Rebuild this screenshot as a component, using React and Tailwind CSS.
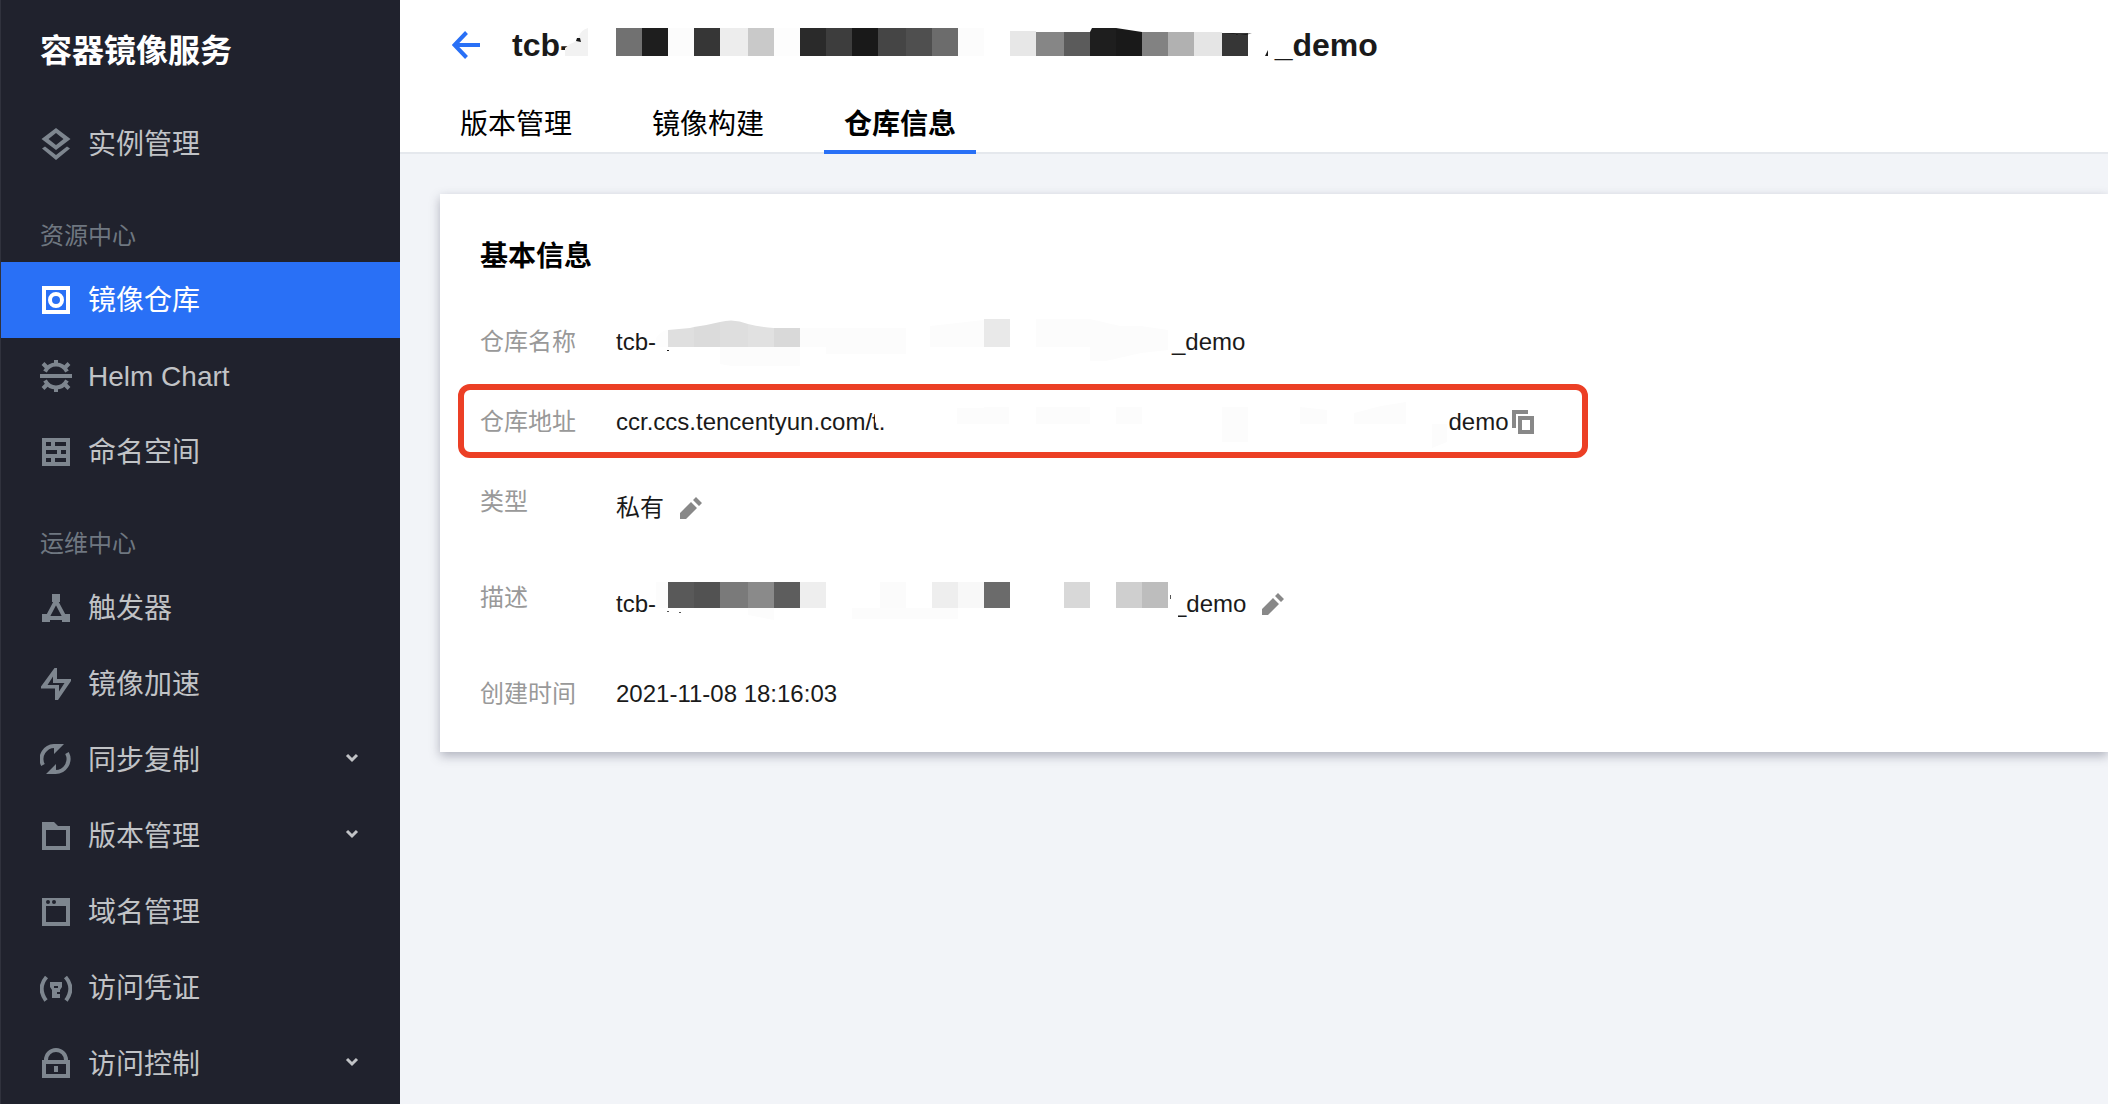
const FONT = "font-['Liberation_Sans','Noto_Sans_CJK_SC',sans-serif]";

const ICONS = {
  layers: (
    <path
      fillRule="evenodd"
      fill="currentColor"
      d="M16 0 30.500 11 16 22 1.500 11ZM16 5 8.500 11 16 17 23.500 11ZM2 20.500 5 18.500 16 27 27 18.500 30 20.500 16 32Z"
    />
  ),
  repo: (
    <>
      <path d="M4 4H28V28H4Z" fill="none" stroke="currentColor" strokeWidth="4" />
      <circle cx="16" cy="16" r="6" fill="none" stroke="currentColor" strokeWidth="4" />
    </>
  ),
  helm: (
    <g fill="none" stroke="currentColor" strokeWidth="4">
      <path d="M0 16H32" />
      <path d="M5 11.5C8 6 12 4.5 16 4.5S24 6 27 11.5" />
      <path d="M5 20.500C8 26 12 27.500 16 27.500S24 26 27 20.500" />
      <path d="M16 0V5M16 27V32M3 3.500 8 8.500M29 3.500 24 8.500M3 28.500 8 23.500M29 28.500 24 23.500" />
    </g>
  ),
  brick: (
    <path
      fillRule="evenodd"
      fill="currentColor"
      d="M2 2H30V30H2ZM6 6V10H11V6ZM15 6V10H26V6ZM6 14V18H17V14ZM21 14V18H26V14ZM6 22V26H11V22ZM15 22V26H26V22Z"
    />
  ),
  trigger: (
    <>
      <path d="M16 9 7 26H25Z" fill="none" stroke="currentColor" strokeWidth="4" />
      <path d="M12 2H20V10H12ZM2 22H10V30H2ZM22 22H30V30H22Z" fill="currentColor" />
    </>
  ),
  bolt: (
    <path
      fillRule="evenodd"
      fill="currentColor"
      d="M14.500 0H17V11H31V13L18 32H15V20.500H1V18.500ZM13 8.500 7.500 17H19V23.500L24.500 15H13Z"
    />
  ),
  sync: (
    <>
      <path d="M3 21A13 13 0 0 1 15 2" fill="none" stroke="currentColor" strokeWidth="4" />
      <path d="M27 9A13 13 0 0 1 15 28" fill="none" stroke="currentColor" strokeWidth="4" />
      <path d="M14 0H24L14 10ZM16 30H6L16 20Z" fill="currentColor" />
    </>
  ),
  folder: (
    <path fillRule="evenodd" fill="currentColor" d="M2 2H14L18 6H30V30H2ZM6 10V26H26V10Z" />
  ),
  window: (
    <path
      fillRule="evenodd"
      fill="currentColor"
      d="M2 2H30V30H2ZM6 10V26H26V10ZM6 6A2 2 0 1 0 10 6A2 2 0 1 0 6 6ZM12 6A2 2 0 1 0 16 6A2 2 0 1 0 12 6Z"
    />
  ),
  key: (
    <>
      <path d="M6.500 5Q-3 16 6 28.500M25.500 5Q35 16 26 28.500" fill="none" stroke="currentColor" strokeWidth="4" />
      <path
        fillRule="evenodd"
        fill="currentColor"
        d="M10 10H22V15L20 18V20H17V22H20V26H12V18L10 15ZM14 14V16H18V14Z"
      />
    </>
  ),
  lock: (
    <>
      <path d="M6 14V12A10 10 0 0 1 26 12V14" fill="none" stroke="currentColor" strokeWidth="4" />
      <path fillRule="evenodd" fill="currentColor" d="M2 12H30V30H2ZM6 16V26H26V16ZM14 18H18V24H14Z" />
    </>
  ),
};

function NavItem({ icon, label, active, expandable }) {
  return (
    <li>
      <a
        href="#"
        aria-current={active ? "page" : undefined}
        className={
          active
            ? "flex h-[76px] items-center gap-4 bg-[#2970f6] pr-10 pl-[39px] text-white"
            : "flex h-[76px] items-center gap-4 pr-10 pl-[39px] text-[#c1c3c6]"
        }
      >
        <svg
          viewBox="0 0 32 32"
          className={active ? "size-8 shrink-0 text-white" : "size-8 shrink-0 text-[#7e868f]"}
          aria-hidden="true"
        >
          {ICONS[icon]}
        </svg>
        <span className="flex-1 pt-0.5 text-[28px] leading-10">{label}</span>
        {expandable && (
          <svg viewBox="0 0 16 16" className="mb-0.5 size-4 shrink-0" aria-hidden="true">
            <path d="M3 4 8 9 13 4" fill="none" stroke="currentColor" strokeWidth="3" />
          </svg>
        )}
      </a>
    </li>
  );
}

function NavSection({ title, children }) {
  return (
    <section>
      <h2 className="h-20 pt-9 pl-[39px] text-2xl leading-9 text-[#6f7780]">{title}</h2>
      <ul>{children}</ul>
    </section>
  );
}

function Sidebar() {
  return (
    <nav className="w-[400px] shrink-0 border-l border-[#30323d] bg-[#20222d]">
      <h1 className="h-[106px] pt-[29px] pl-[39px] text-[32px] leading-[44px] font-bold text-white">
        容器镜像服务
      </h1>
      <ul>
        <NavItem icon="layers" label="实例管理" />
      </ul>
      <NavSection title="资源中心">
        <NavItem icon="repo" label="镜像仓库" active />
        <NavItem icon="helm" label="Helm Chart" />
        <NavItem icon="brick" label="命名空间" />
      </NavSection>
      <NavSection title="运维中心">
        <NavItem icon="trigger" label="触发器" />
        <NavItem icon="bolt" label="镜像加速" />
        <NavItem icon="sync" label="同步复制" expandable />
        <NavItem icon="folder" label="版本管理" expandable />
        <NavItem icon="window" label="域名管理" />
        <NavItem icon="key" label="访问凭证" />
        <NavItem icon="lock" label="访问控制" expandable />
      </NavSection>
    </nav>
  );
}

/* Pixelated blocks that hide the private part of each name. */
function TitleMosaic() {
  const cells = [
    [46, 26, 0, "#717171"], [72, 26, 0, "#1e1e1e"], [98, 26, 0, "#fcfcfc"], [124, 26, 0, "#363636"],
    [150, 28, 0, "#ededed"], [178, 26, 0, "#c9c9c9"], [204, 26, 0, "#fdfdfd"], [230, 26, 0, "#2a2a2a"],
    [256, 26, 0, "#3d3d3d"], [282, 26, 0, "#191919"], [308, 28, 0, "#454545"], [336, 26, 0, "#4f4f4f"],
    [362, 26, 0, "#6c6c6c"], [388, 26, 0, "#fcfcfc"], [440, 26, 3, "#e7e7e7"], [466, 28, 4, "#868686"],
    [494, 26, 4, "#5b5b5b"], [572, 26, 4, "#828282"], [598, 26, 4, "#b1b1b1"], [624, 28, 4, "#e5e5e5"],
    [652, 26, 5, "#363636"],
  ];
  return (
    <svg viewBox="1 0 704 28" className="mb-1.5 h-7 w-[704px] shrink-0 overflow-visible" aria-hidden="true">
      <path d="M-5 28V20L0 16Q7 14 9 8T18 0V28Z" fill="#f2f2f2" />
      <path d="M6 13 7 10H10L11 14Z" fill="#1a1a1a" />
      {cells.map(([x, w, y, fill]) => (
        <rect key={x} x={x} y={y} width={w} height={28 - y} fill={fill} />
      ))}
      <path d="M520 28V4L522 0H546V28Z" fill="#1e1e1e" />
      <path d="M546 0 572 4V28H546Z" fill="#191919" />
      <path d="M654 5H663L670 7 682 5 676 7Z" fill="#1a1a1a" />
      <path d="M698 22V28H695Z" fill="#1a1a1a" />
    </svg>
  );
}

function NameMosaic() {
  return (
    <svg viewBox="0 0 516 48" className="h-12 w-[516px] shrink-0" aria-hidden="true">
      <path d="M0 20Q6 12 12 12V29H0Z" fill="#fdfdfd" />
      <path d="M12 12 34 10 38 9V29H12Z" fill="#dfdfdf" />
      <path d="M38 9Q52 7 64 4V29H38Z" fill="#dbdbdb" />
      <path d="M64 4Q78 0 92 6V29H64Z" fill="#dedede" />
      <path d="M92 6Q104 9 118 10V29H92Z" fill="#e1e1e1" />
      <path d="M118 10H144V29H118Z" fill="#d9d9d9" />
      <path
        d="M64 29H144V48H76L64 46ZM144 10H170V29H144ZM170 10H250V36H170ZM274 8 328 2V29H274ZM380 1H434V29H380ZM434 1 464 8H485L512 12V32L485 35 450 43H434V29H434Z"
        fill="#fcfcfc"
      />
      <rect x="328" y="1" width="26" height="28" fill="#e9e9e9" />
      <path d="M11 32H13V33H11Z" fill="#1a1a1a" />
    </svg>
  );
}

function AddressMosaic() {
  return (
    <svg viewBox="0 0 563 48" className="h-12 w-[563px] shrink-0 overflow-visible" aria-hidden="true">
      <path d="M-10 10H4V27H-8L-10 24Z" fill="#ffffff" />
      <path
        d="M72 10H99V26H72ZM99 9H124V26H99ZM151 9H205V26H151ZM231 9H257V26H231ZM337 9H363V44H337ZM415 9 442 12V26H415ZM469 15 496 8 521 4V26H469ZM547 26H562V44L547 50Z"
        fill="#fcfcfc"
      />
    </svg>
  );
}

function DescriptionMosaic() {
  const cells = [
    [0, 12, "#fcfcfc"], [12, 26, "#595959"], [38, 26, "#525252"], [64, 28, "#7a7a7a"], [92, 26, "#8a8a8a"],
    [118, 26, "#5d5d5d"], [144, 26, "#eeeeee"], [224, 26, "#fbfbfb"], [276, 26, "#eeeeee"],
    [302, 26, "#f8f8f8"], [328, 26, "#6b6b6b"], [408, 26, "#d8d8d8"], [460, 26, "#cfcfcf"],
    [486, 26, "#bdbdbd"],
  ];
  return (
    <svg
      viewBox="0 0 517 44"
      className="relative h-11 w-[517px] shrink-0 overflow-visible"
      aria-hidden="true"
    >
      {cells.map(([x, w, fill]) => (
        <rect key={x} x={x} y="0" width={w} height="26" fill={fill} />
      ))}
      <path d="M92 26H118V38L92 33ZM196 26H276V37H196ZM276 26H302V37H276Z" fill="#fcfcfc" />
      <path d="M11 29H13V30H11ZM23 30H25V31H23ZM514 13H515V17H514Z" fill="#555555" />
      <path d="M515 30H522V40H515Z" fill="#ffffff" />
    </svg>
  );
}

function EditButton({ label }) {
  return (
    <button type="button" aria-label={label} className="shrink-0 cursor-pointer text-[#888888]">
      <svg viewBox="0 0 22 22" className="size-[22px]" aria-hidden="true">
        <path d="M0 22V16L11 5 17 11 6 22ZM13 3 16 0 22 6 19 9Z" fill="currentColor" />
      </svg>
    </button>
  );
}

function Label({ children }) {
  return <dt className="w-[136px] shrink-0 text-2xl leading-10 text-[#999999]">{children}</dt>;
}

function Tab({ label, active }) {
  return (
    <button
      type="button"
      role="tab"
      aria-selected={Boolean(active)}
      className={
        active
          ? "-mb-0.5 border-b-4 border-[#2970f6] px-5 pt-2.5 text-[28px] leading-10 font-bold text-black"
          : "-mb-0.5 border-b-4 border-transparent px-5 pt-2.5 text-[28px] leading-10 text-black"
      }
    >
      {label}
    </button>
  );
}

export default function App() {
  return (
    <div className={`flex min-h-screen overflow-hidden bg-[#f2f4f8] ${FONT}`}>
      <Sidebar />
      <main className="min-w-0 flex-1">
        <header className="border-b-2 border-[#e5e8ed] bg-white pl-10">
          <div className="flex h-[90px] items-center gap-8 pl-3">
            <button type="button" aria-label="返回" className="shrink-0 text-[#2970f6]">
              <svg viewBox="0 0 28 28" className="size-7" aria-hidden="true">
                <path
                  d="M14.500 1.500 2.500 14 14.500 26.500M2.500 14H28"
                  fill="none"
                  stroke="currentColor"
                  strokeWidth="4"
                />
              </svg>
            </button>
            <h2 className="flex items-center text-[32px] leading-10 font-bold text-[#1a1a1a]">
              <span>tcb-</span>
              <TitleMosaic />
              <span>_demo</span>
            </h2>
          </div>
          <div role="tablist" className="flex h-[62px] items-stretch gap-10">
            <Tab label="版本管理" />
            <Tab label="镜像构建" />
            <Tab label="仓库信息" active />
          </div>
        </header>

        <section className="mt-10 ml-10 bg-white px-10 pt-[41px] pb-[38px] shadow-[0_4px_10px_rgba(54,58,80,0.35)]">
          <h3 className="text-[28px] leading-[44px] font-bold text-black">基本信息</h3>
          <dl className="mt-[43px] flex flex-col gap-10 text-2xl text-[#1a1a1a]">
            <div className="flex h-10 items-center">
              <Label>仓库名称</Label>
              <dd className="flex items-center">
                <span>tcb-</span>
                <NameMosaic />
                <span>_demo</span>
              </dd>
            </div>
            <div className="relative flex h-10 items-center">
              <div className="pointer-events-none absolute -top-[18px] -left-[22px] h-[74px] w-[1130px] rounded-xl border-[6px] border-[#ec3f25]" />
              <Label>仓库地址</Label>
              <dd className="flex items-center">
                <span>ccr.ccs.tencentyun.com/t.</span>
                <AddressMosaic />
                <span>demo</span>
                <button type="button" aria-label="复制" className="ml-1 text-[#888888]">
                  <svg viewBox="0 0 22 24" className="h-6 w-[22px]" aria-hidden="true">
                    <path d="M16 2H2V18M8 8H20V22H8Z" fill="none" stroke="currentColor" strokeWidth="4" />
                  </svg>
                </button>
              </dd>
            </div>
            <div className="flex h-14 items-start">
              <Label>类型</Label>
              <dd className="flex h-full items-center gap-4 pb-1">
                <span>私有</span>
                <EditButton label="编辑类型" />
              </dd>
            </div>
            <div className="flex h-14 items-start">
              <Label>描述</Label>
              <dd className="flex h-full items-center pb-1">
                <span>tcb-</span>
                <DescriptionMosaic />
                <span className="mr-4">_demo</span>
                <EditButton label="编辑描述" />
              </dd>
            </div>
            <div className="flex h-10 items-center">
              <Label>创建时间</Label>
              <dd>2021-11-08 18:16:03</dd>
            </div>
          </dl>
        </section>
      </main>
    </div>
  );
}
